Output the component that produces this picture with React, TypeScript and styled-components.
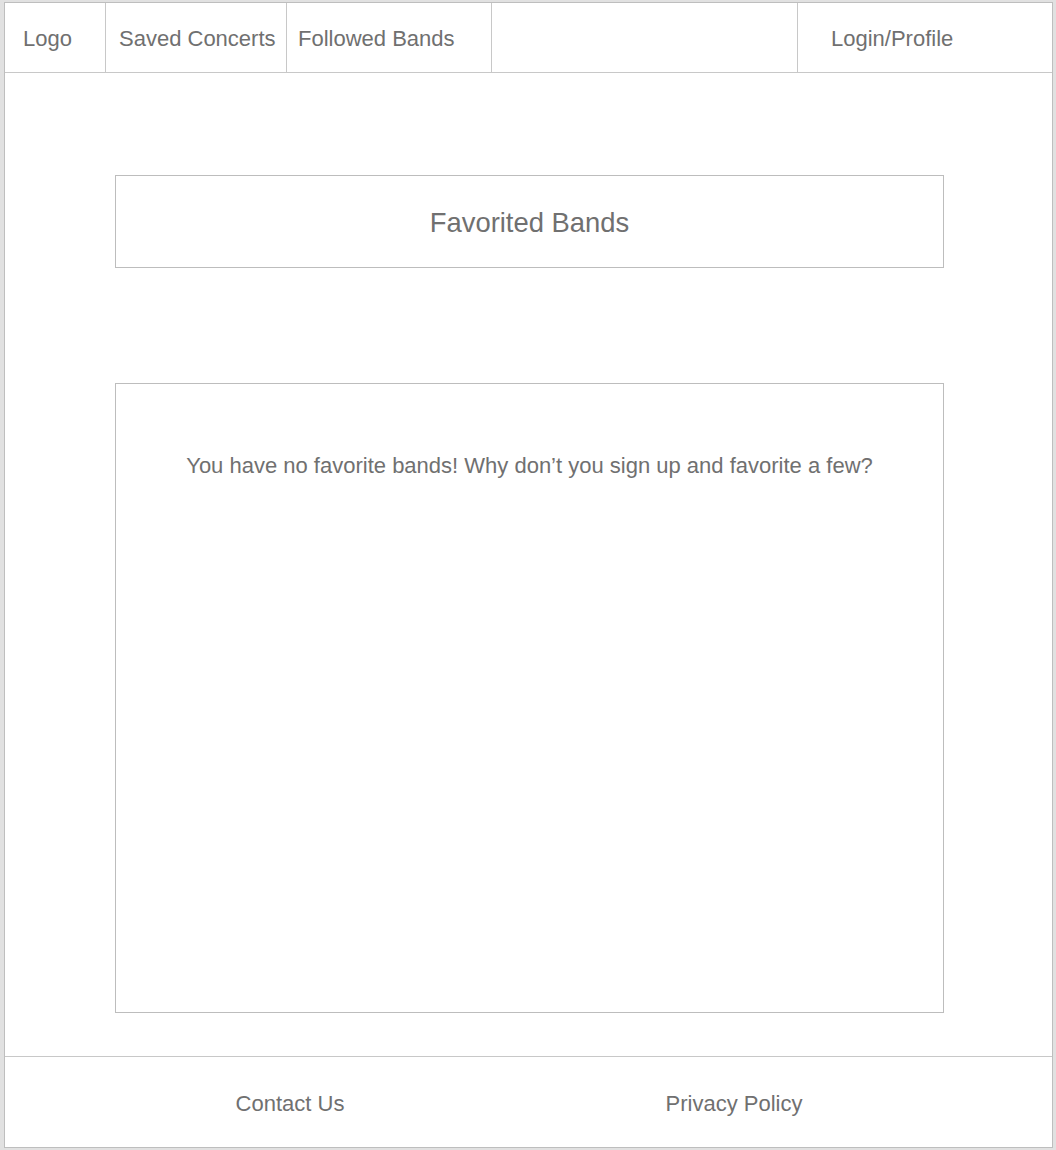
import React from "react";
import styled, { createGlobalStyle } from "styled-components";

const Global = createGlobalStyle`
  html, body { margin: 0; padding: 0; background: #ffffff; }
  body { font-family: "Liberation Sans", Arial, Helvetica, sans-serif; }
`;

const Frame = styled.div`
  width: 1056px;
  height: 1150px;
  box-sizing: border-box;
  background: #e1e1e1;
  padding: 2px 3px 2px 4px;
`;

const Panel = styled.div`
  height: 100%;
  box-sizing: border-box;
  background: #ffffff;
  border: 1px solid #bebebe;
  display: flex;
  flex-direction: column;
`;

const Nav = styled.nav`
  display: flex;
  height: 70px;
  box-sizing: border-box;
  border-bottom: 1px solid #c8c8c8;
`;

const NavCell = styled.div<{ $w?: number; $pad: number; $last?: boolean }>`
  ${(p) => (p.$w ? `width: ${p.$w}px; flex: none;` : "flex: 1;")}
  box-sizing: border-box;
  display: flex;
  align-items: center;
  padding-left: ${(p) => p.$pad}px;
  padding-top: 2px;
  border-right: ${(p) => (p.$last ? "none" : "1px solid #c8c8c8")};
  font-size: 22px;
  color: #707070;
  white-space: nowrap;
`;

const Main = styled.main`
  flex: 1;
  display: flex;
  flex-direction: column;
  align-items: center;
  padding-top: 102px;
  padding-left: 2px;
  border-bottom: 1px solid #c8c8c8;
`;

const TitleBox = styled.div`
  width: 829px;
  height: 93px;
  box-sizing: border-box;
  border: 1px solid #bdbdbd;
  display: flex;
  align-items: center;
  justify-content: center;
  font-size: 27.4px;
  color: #707070;
  padding-top: 3px;
`;

const ContentBox = styled.div`
  margin-top: 115px;
  width: 829px;
  height: 630px;
  box-sizing: border-box;
  border: 1px solid #bdbdbd;
  padding-top: 69px;
  text-align: center;
  font-size: 22px;
  color: #707070;
`;

const Footer = styled.footer`
  height: 90px;
  display: grid;
  grid-template-columns: 444px 444px;
  padding-left: 63px;
  align-items: center;
  padding-top: 3px;
  box-sizing: border-box;
`;

const FooterLink = styled.div`
  text-align: center;
  font-size: 22px;
  color: #707070;
`;

export default function App() {
  return (
    <>
      <Global />
      <Frame>
        <Panel>
          <Nav>
            <NavCell $w={101} $pad={18}>Logo</NavCell>
            <NavCell $w={181} $pad={13}>Saved Concerts</NavCell>
            <NavCell $w={205} $pad={11}>Followed Bands</NavCell>
            <NavCell $w={306} $pad={0}></NavCell>
            <NavCell $pad={33} $last>Login/Profile</NavCell>
          </Nav>
          <Main>
            <TitleBox>Favorited Bands</TitleBox>
            <ContentBox>
              You have no favorite bands! Why don’t you sign up and favorite a few?
            </ContentBox>
          </Main>
          <Footer>
            <FooterLink>Contact Us</FooterLink>
            <FooterLink>Privacy Policy</FooterLink>
          </Footer>
        </Panel>
      </Frame>
    </>
  );
}
